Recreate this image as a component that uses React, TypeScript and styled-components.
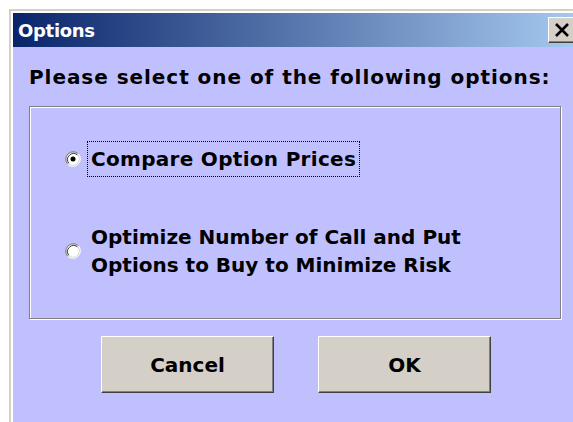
import React from "react";
import styled, { createGlobalStyle } from "styled-components";

const GlobalStyle = createGlobalStyle`
  html, body {
    margin: 0;
    padding: 0;
    background: #ffffff;
    overflow: hidden;
  }
  body {
    font-family: "DejaVu Sans", Tahoma, Verdana, sans-serif;
  }
`;

const Window = styled.div`
  margin: 9px 0 0 9px;
  width: 571px;
  height: 430px;
  box-sizing: border-box;
  border-left: 2px solid #d4d0c8;
  border-top: 2px solid #d4d0c8;
  box-shadow: inset 2px 2px 0 #ffffff;
  padding: 2px 0 0 2px;
  background: #c0c0ff;
`;

const TitleBar = styled.div`
  height: 34px;
  display: flex;
  align-items: center;
  justify-content: space-between;
  padding: 0 2px 0 5px;
  background: linear-gradient(to right, #0a246a, #a6caf0);
`;

const Title = styled.span`
  color: #ffffff;
  font-weight: bold;
  font-size: 18px;
  letter-spacing: -0.3px;
`;

const CloseButton = styled.div`
  width: 30px;
  height: 26px;
  box-sizing: border-box;
  display: flex;
  align-items: center;
  justify-content: flex-start;
  padding-left: 5px;
  background: #d4d0c8;
  border-top: 1px solid #ffffff;
  border-left: 1px solid #ffffff;
  border-right: 1px solid #404040;
  border-bottom: 1px solid #404040;
  box-shadow: inset -1px -1px 0 #808080;
`;

const Body = styled.div`
  padding: 19px 0 0 16px;
`;

const Prompt = styled.div`
  font-size: 20px;
  line-height: 22px;
  font-weight: bold;
  color: #000000;
  letter-spacing: 0.95px;
`;

const GroupFrame = styled.div`
  margin-top: 18px;
  width: 532px;
  height: 213px;
  box-sizing: border-box;
  border: 1px solid #808080;
  box-shadow: inset 1px 1px 0 #ffffff, 1px 1px 0 #ffffff;
  display: flex;
  flex-direction: column;
  padding: 34px 0 0 35px;
`;

const RadioRow = styled.div<{ $gap: number }>`
  display: flex;
  align-items: center;
  margin-bottom: ${(p) => p.$gap}px;
`;

const RadioMark = styled.svg`
  flex: none;
  width: 16px;
  height: 16px;
  margin-right: 10px;
`;

const Label = styled.div<{ $focused?: boolean; $spacing: number }>`
  font-size: 20px;
  line-height: ${(p) => (p.$focused ? "22px" : "28px")};
  font-weight: bold;
  color: #000000;
  letter-spacing: ${(p) => p.$spacing}px;
  padding: 6px 3px;
  border: 1px dotted ${(p) => (p.$focused ? "#000000" : "transparent")};
  margin-left: -4px;
`;

const ButtonRow = styled.div`
  display: flex;
  gap: 44px;
  margin: 17px 0 0 72px;
`;

const DialogButton = styled.div`
  width: 173px;
  height: 57px;
  box-sizing: border-box;
  display: flex;
  align-items: center;
  justify-content: center;
  background: #d4d0c8;
  border-top: 1px solid #ffffff;
  border-left: 1px solid #ffffff;
  border-right: 1px solid #404040;
  border-bottom: 1px solid #404040;
  box-shadow: inset -1px -1px 0 #808080;
  font-size: 20px;
  font-weight: bold;
  color: #000000;
`;

const Radio = ({ checked }: { checked?: boolean }) => (
  <RadioMark viewBox="0 0 16 16">
    <circle cx="8" cy="8" r="7.5" fill="#d4d0c8" />
    <path d="M2.7 13.3 A7.5 7.5 0 0 1 13.3 2.7" stroke="#808080" strokeWidth="1" fill="none" />
    <path d="M13.3 2.7 A7.5 7.5 0 0 1 2.7 13.3" stroke="#ffffff" strokeWidth="1" fill="none" />
    <circle cx="8" cy="8" r="6" fill="#ffffff" />
    <path d="M3.8 12.2 A6 6 0 0 1 12.2 3.8" stroke="#404040" strokeWidth="1" fill="none" />
    {checked && <circle cx="8" cy="8" r="2.5" fill="#000000" />}
  </RadioMark>
);

export default function App() {
  return (
    <>
      <GlobalStyle />
      <Window>
        <TitleBar>
          <Title>Options</Title>
          <CloseButton>
            <svg width="16" height="14" viewBox="0 0 16 14">
              <path d="M2 1 L14 13 M14 1 L2 13" stroke="#000" strokeWidth="2.6" />
            </svg>
          </CloseButton>
        </TitleBar>
        <Body>
          <Prompt>Please select one of the following options:</Prompt>
          <GroupFrame>
            <RadioRow $gap={39}>
              <Radio checked />
              <Label $focused $spacing={0.3}>
                Compare Option Prices
              </Label>
            </RadioRow>
            <RadioRow $gap={0}>
              <Radio />
              <Label $spacing={0}>
                Optimize Number of Call and Put
                <br />
                Options to Buy to Minimize Risk
              </Label>
            </RadioRow>
          </GroupFrame>
          <ButtonRow>
            <DialogButton>Cancel</DialogButton>
            <DialogButton>OK</DialogButton>
          </ButtonRow>
        </Body>
      </Window>
    </>
  );
}
